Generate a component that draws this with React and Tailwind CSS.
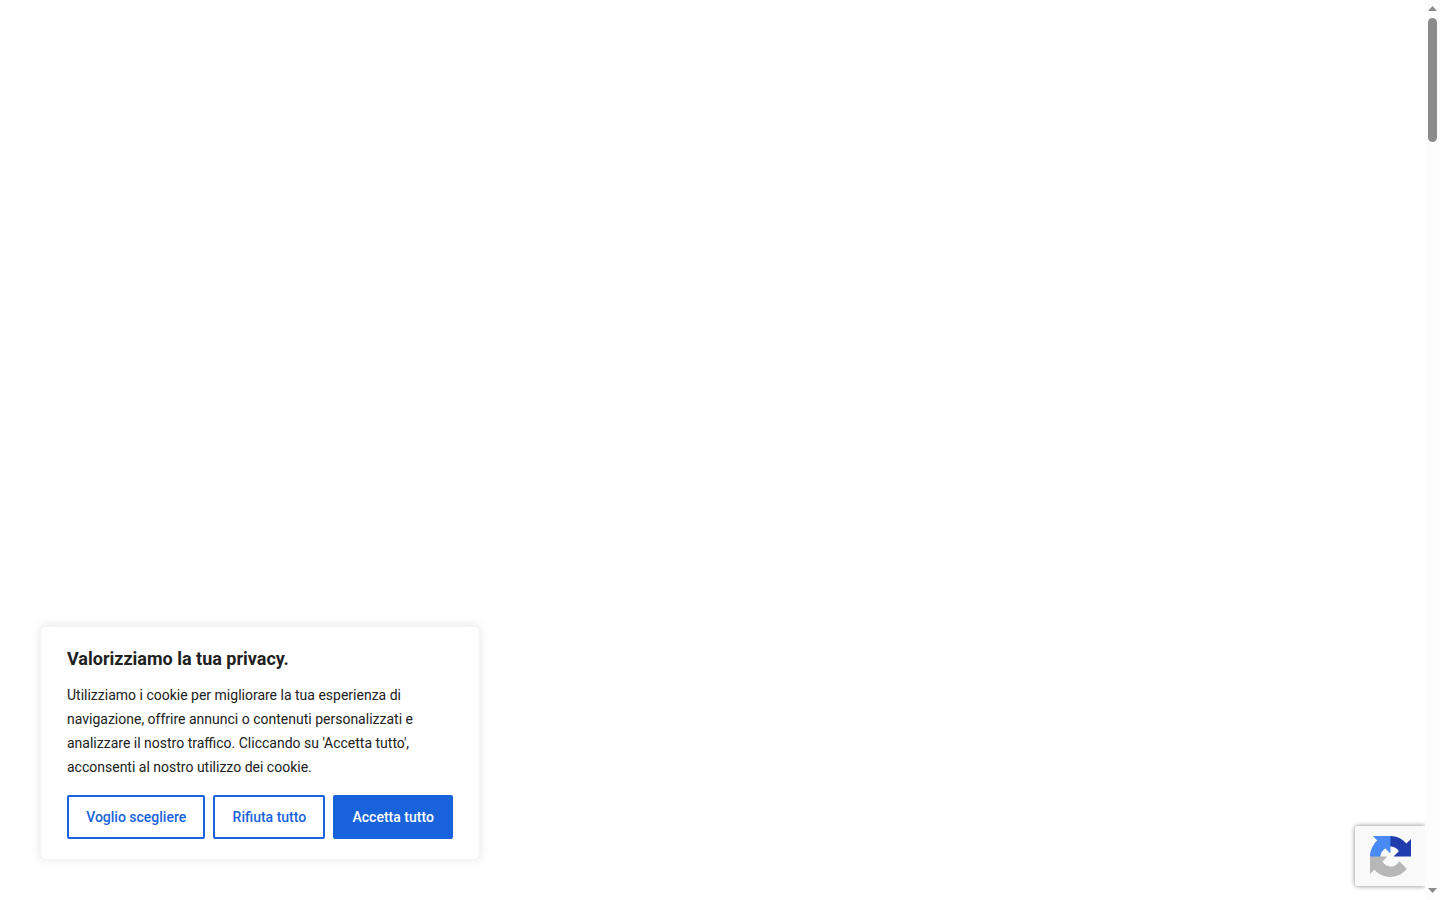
import React from "react";

function RecaptchaLogo() {
  return (
    <svg viewBox="0 0 64 64" className="size-[41px]" aria-hidden="true">
      <path
        fill="#1f3dac"
        d="M64 31.955l-.033-1.37V4.687l-7.16 7.16C50.948 4.674 42.033.093 32.05.093c-10.4 0-19.622 4.96-25.458 12.64l11.736 11.86a15.55 15.55 0 0 1 4.754-5.334c2.05-1.6 4.952-2.906 8.968-2.906.485 0 .86.057 1.135.163 4.976.393 9.288 3.14 11.828 7.124l-8.307 8.307L64 31.953"
      />
      <path
        fill="#4a8af5"
        d="M31.862.094l-1.37.033H4.594l7.16 7.16C4.58 13.147 0 22.06 0 32.046c0 10.4 4.96 19.622 12.64 25.458L24.5 45.768a15.55 15.55 0 0 1-5.334-4.754c-1.6-2.05-2.906-4.952-2.906-8.968 0-.485.057-.86.163-1.135.393-4.976 3.14-9.288 7.124-11.828l8.307 8.307L31.86.095"
      />
      <path
        fill="#b7b7b7"
        d="M.001 32.045l.033 1.37v25.898l7.16-7.16c5.86 7.173 14.774 11.754 24.76 11.754 10.4 0 19.622-4.96 25.458-12.64l-11.736-11.86a15.55 15.55 0 0 1-4.754 5.334c-2.05 1.6-4.952 2.906-8.968 2.906-.485 0-.86-.057-1.135-.163-4.976-.393-9.288-3.14-11.828-7.124l8.307-8.307c-10.522.04-22.4.066-27.295-.005"
      />
    </svg>
  );
}

function CookieButton({ primary, children }) {
  return (
    <button
      type="button"
      className={
        primary
          ? "flex-auto cursor-pointer whitespace-nowrap rounded-xs border-2 border-[#1863dc] bg-[#1863dc] px-4 py-2 text-sm leading-6 font-medium text-white"
          : "flex-auto cursor-pointer whitespace-nowrap rounded-xs border-2 border-[#1863dc] bg-transparent px-4 py-2 text-sm leading-6 font-medium text-[#1863dc]"
      }
    >
      {children}
    </button>
  );
}

function CookieBanner() {
  return (
    <section
      aria-labelledby="cookie-title"
      className="absolute bottom-10 left-10 w-[440px] max-w-[90%] rounded-md border border-[#f4f4f4] bg-white px-[26px] py-5 text-[#212121] shadow-[0_-1px_10px_0_#acabab4d]"
    >
      <h2 id="cookie-title" className="mb-3 text-lg leading-6 font-bold">
        Valorizziamo la tua privacy.
      </h2>
      <p className="text-sm leading-6">
        Utilizziamo i cookie per migliorare la tua esperienza di navigazione,
        offrire annunci o contenuti personalizzati e analizzare il nostro
        traffico. Cliccando su 'Accetta tutto', acconsenti al nostro utilizzo
        dei cookie.
      </p>
      <div className="mt-4 flex gap-2">
        <CookieButton>Voglio scegliere</CookieButton>
        <CookieButton>Rifiuta tutto</CookieButton>
        <CookieButton primary>Accetta tutto</CookieButton>
      </div>
    </section>
  );
}

function ScrollTrack() {
  return (
    <div
      aria-hidden="true"
      className="flex w-[15px] shrink-0 flex-col items-center bg-[#fcfcfc] pt-1.5 pb-[7px]"
    >
      <svg viewBox="0 0 9 5" className="h-[5px] w-[9px]">
        <path d="M0 5L4.5 0L9 5Z" fill="#8b8b8b" />
      </svg>
      <div className="mt-[7px] h-[124px] w-[9px] rounded-full bg-[#8b8b8b]" />
      <svg viewBox="0 0 9 5" className="mt-auto h-[5px] w-[9px]">
        <path d="M0 0L4.5 5L9 0Z" fill="#8b8b8b" />
      </svg>
    </div>
  );
}

export default function App() {
  return (
    <div className="flex h-screen bg-white font-[Roboto,sans-serif]">
      <main className="relative min-w-0 flex-1 overflow-hidden">
        <CookieBanner />
        <div className="absolute right-0 bottom-3.5 flex h-[60px] w-[70px] items-center justify-center rounded-l-xs bg-[#f9f9f9] pt-px shadow-[0_0_5px_0_gray]">
          <RecaptchaLogo />
        </div>
      </main>
      <ScrollTrack />
    </div>
  );
}
